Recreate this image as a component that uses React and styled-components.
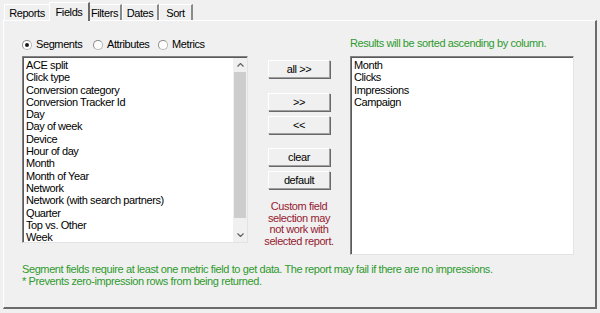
import React from 'react';
import styled, { createGlobalStyle } from 'styled-components';

const Global = createGlobalStyle`
  html, body {
    margin: 0;
    padding: 0;
    background: #f0f0f0;
  }
  body {
    font-family: "Liberation Sans", Arial, sans-serif;
    font-size: 11px;
    letter-spacing: -0.4px;
    color: #000;
  }
`;

const Window = styled.div`
  width: 600px;
  height: 313px;
  background: #f0f0f0;
  padding: 2px 0 0 3px;
  box-sizing: border-box;
`;

const TabStrip = styled.div`
  display: flex;
  align-items: flex-end;
  height: 18px;
  padding-left: 1px;
  position: relative;
  z-index: 1;
`;

const Tab = styled.div`
  box-sizing: border-box;
  width: ${({ w }) => w}px;
  height: ${({ active }) => (active ? 19 : 16)}px;
  margin: ${({ active }) => (active ? '0 -2px -1px -2px' : '0')};
  padding-top: ${({ active }) => (active ? 3 : 2)}px;
  text-align: center;
  background: #f0f0f0;
  border-top: 1px solid #fff;
  border-left: 1px solid #fff;
  border-right: 2px solid #6b6b6b;
  border-right-color: ${({ active }) => (active ? '#6b6b6b' : '#8a8a8a')};
  line-height: 12px;
  z-index: ${({ active }) => (active ? 2 : 1)};
  position: relative;
`;

const Panel = styled.div`
  box-sizing: border-box;
  width: 594px;
  height: 289px;
  border-top: 1px solid #fff;
  border-left: 1px solid #fff;
  border-right: 2px solid #6b6b6b;
  border-bottom: 2px solid #6b6b6b;
  padding: 17px 0 0 18px;
  display: grid;
  grid-template-columns: 226px 102px 224px;
  grid-template-rows: 13px 198px auto;
  row-gap: 5px;
`;

const RadioRow = styled.div`
  display: flex;
  align-items: center;
`;

const RadioItem = styled.label`
  display: flex;
  align-items: center;
  width: ${({ w }) => w}px;
  gap: 4px;
  line-height: 13px;
`;

const RadioDot = styled.span`
  box-sizing: border-box;
  width: 10px;
  height: 10px;
  border-radius: 50%;
  background: #fff;
  border: 1px solid #b4b4b4;
  border-top-color: #8c8c8c;
  border-left-color: #8c8c8c;
  display: flex;
  align-items: center;
  justify-content: center;
  &::after {
    content: '';
    width: 4px;
    height: 4px;
    border-radius: 50%;
    background: ${({ checked }) => (checked ? '#1a1a1a' : 'transparent')};
  }
`;

const Hint = styled.div`
  grid-column: 3;
  color: #2e9a2e;
  line-height: 13px;
  margin-top: -1px;
`;

const ListBox = styled.div`
  box-sizing: border-box;
  height: ${({ h }) => h}px;
  background: #fff;
  border-top: 1px solid #828282;
  border-left: 1px solid #828282;
  border-right: 1px solid #e3e3e3;
  border-bottom: 1px solid #e3e3e3;
  box-shadow: inset 1px 1px 0 #5a5a5a;
  display: flex;
  overflow: hidden;
`;

const Items = styled.div`
  flex: 1;
  padding: 2px 0 0 3px;
`;

const Item = styled.div`
  line-height: 12.3px;
  white-space: nowrap;
`;

const ScrollBar = styled.div`
  width: 14px;
  margin: 1px 0 0 0;
  background: #f0f0f0;
  display: flex;
  flex-direction: column;
`;

const Arrow = styled.div`
  height: 14px;
  display: flex;
  align-items: center;
  justify-content: center;
`;

const Thumb = styled.div`
  flex: 1;
  margin: 0 1px;
  display: flex;
  flex-direction: column;
  &::before {
    content: '';
    display: block;
    height: 146px;
    background: #cdcdcd;
  }
`;

const Middle = styled.div`
  display: flex;
  flex-direction: column;
  align-items: center;
  padding-top: 4px;
`;

const Button = styled.button`
  box-sizing: border-box;
  width: 62px;
  height: 18px;
  margin-top: ${({ gap }) => gap}px;
  padding: 0;
  font-family: inherit;
  font-size: 11px;
  letter-spacing: inherit;
  color: #000;
  background: #f0f0f0;
  border-top: 1px solid #fff;
  border-left: 1px solid #fff;
  border-right: 1px solid #a0a0a0;
  border-bottom: 1px solid #a0a0a0;
  box-shadow: 1px 1px 0 #696969;
  line-height: 14px;
`;

const Warning = styled.div`
  margin-top: 12px;
  width: 100px;
  text-align: center;
  color: #961a30;
  line-height: 11.7px;
`;

const Footer = styled.div`
  grid-column: 1 / span 3;
  color: #2e9a2e;
  line-height: 11.7px;
  padding-top: 5px;
`;

const Chevron = ({ up }) => (
  <svg width="7" height="4" viewBox="0 0 7 4">
    <polyline
      points={up ? '0.5,3.5 3.5,0.5 6.5,3.5' : '0.5,0.5 3.5,3.5 6.5,0.5'}
      fill="none"
      stroke="#606060"
      strokeWidth="1.2"
    />
  </svg>
);

const segments = [
  'ACE split',
  'Click type',
  'Conversion category',
  'Conversion Tracker Id',
  'Day',
  'Day of week',
  'Device',
  'Hour of day',
  'Month',
  'Month of Year',
  'Network',
  'Network (with search partners)',
  'Quarter',
  'Top vs. Other',
  'Week',
];

const selected = ['Month', 'Clicks', 'Impressions', 'Campaign'];

const tabs = [
  { label: 'Reports', w: 47 },
  { label: 'Fields', w: 41, active: true },
  { label: 'Filters', w: 34 },
  { label: 'Dates', w: 37 },
  { label: 'Sort', w: 34 },
];

export default function App() {
  return (
    <Window>
      <Global />
      <TabStrip>
        {tabs.map(t => (
          <Tab key={t.label} w={t.w} active={t.active}>{t.label}</Tab>
        ))}
      </TabStrip>
      <Panel>
        <RadioRow>
          <RadioItem w={71}><RadioDot checked />Segments</RadioItem>
          <RadioItem w={65}><RadioDot />Attributes</RadioItem>
          <RadioItem w={60}><RadioDot />Metrics</RadioItem>
        </RadioRow>
        <div />
        <Hint>Results will be sorted ascending by column.</Hint>

        <div>
          <ListBox h={187}>
            <Items>
              {segments.map(s => <Item key={s}>{s}</Item>)}
            </Items>
            <ScrollBar>
              <Arrow><Chevron up /></Arrow>
              <Thumb />
              <Arrow><Chevron /></Arrow>
            </ScrollBar>
          </ListBox>
        </div>

        <Middle>
          <Button gap={0}>all &gt;&gt;</Button>
          <Button gap={15}>&gt;&gt;</Button>
          <Button gap={5}>&lt;&lt;</Button>
          <Button gap={14}>clear</Button>
          <Button gap={5}>default</Button>
          <Warning>
            Custom field<br />selection may<br />not work with<br />selected report.
          </Warning>
        </Middle>

        <ListBox h={199}>
          <Items>
            {selected.map(s => <Item key={s}>{s}</Item>)}
          </Items>
        </ListBox>

        <Footer>
          Segment fields require at least one metric field to get data. The report may fail if there are no impressions.
          <br />* Prevents zero-impression rows from being returned.
        </Footer>
      </Panel>
    </Window>
  );
}
